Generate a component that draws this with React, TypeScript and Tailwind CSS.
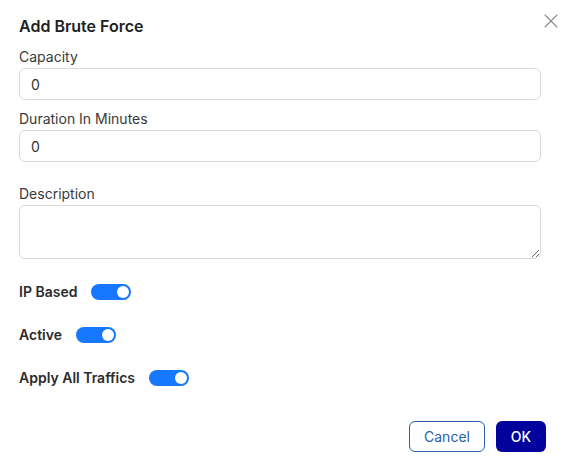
import { X } from "lucide-react";

function Toggle() {
  return (
    <div className="relative h-4 w-10 rounded-full bg-[#1677ff]">
      <div className="absolute right-[2px] top-[2px] h-3 w-3 rounded-full bg-white" />
    </div>
  );
}

function ToggleRow({ label }: { label: string }) {
  return (
    <div className="flex h-5 items-center gap-[14px]">
      <span className="text-sm font-semibold text-[#2b2b2b]">{label}</span>
      <Toggle />
    </div>
  );
}

export default function App() {
  return (
    <div
      className="relative h-[462px] w-[566px] bg-white pl-[19px] pr-[25px] pt-[14px] text-[#333]"
      style={{ fontFamily: "Inter, 'Noto Sans', sans-serif" }}
    >
      <button className="absolute right-[3px] top-[9px] text-[#8c8c8c]">
        <X className="h-6 w-6" strokeWidth={1.1} />
      </button>

      <h2 className="h-6 text-base font-semibold leading-6 text-[#222]">Add Brute Force</h2>

      <label className="mt-[9px] mb-px block h-5 text-sm leading-5 text-[#3a3a3a]">Capacity</label>
      <input
        readOnly
        value="0"
        className="block h-8 w-full rounded-md border border-[#d9d9d9] px-[11px] text-sm text-[#333] outline-none"
      />

      <label className="mt-[9px] mb-px block h-5 text-sm leading-5 text-[#3a3a3a]">Duration In Minutes</label>
      <input
        readOnly
        value="0"
        className="block h-8 w-full rounded-md border border-[#d9d9d9] px-[11px] text-sm text-[#333] outline-none"
      />

      <label className="mt-[22px] mb-px block h-5 text-sm leading-5 text-[#3a3a3a]">Description</label>
      <textarea className="block h-[54px] w-full rounded-md border border-[#d9d9d9] px-[11px] py-1 text-sm outline-none" />

      <div className="mt-[23px] flex flex-col gap-[23px]">
        <ToggleRow label="IP Based" />
        <ToggleRow label="Active" />
        <ToggleRow label="Apply All Traffics" />
      </div>

      <div className="-mr-[5px] mt-[33px] flex justify-end gap-[11px]">
        <button className="h-[31px] w-[76px] rounded-md border border-[#2a5fa5] text-sm text-[#2a5fa5]">
          Cancel
        </button>
        <button className="h-[31px] w-[50px] rounded-md bg-[#02029c] text-sm font-medium text-white">
          OK
        </button>
      </div>
    </div>
  );
}
